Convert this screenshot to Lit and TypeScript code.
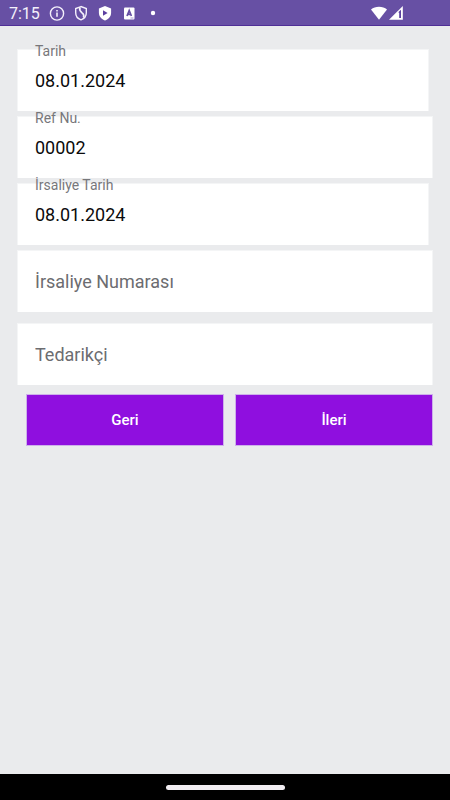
import { LitElement, html, css } from "lit";
import { customElement, property } from "lit/decorators.js";

@customElement("status-bar")
class StatusBar extends LitElement {
  static styles = css`
    :host {
      display: flex;
      align-items: center;
      box-sizing: border-box;
      height: 26px;
      padding: 0 46px 0 9px;
      background: #6750a4;
      border-bottom: 1px solid #4f2f96;
      color: #f4f0fb;
      font-size: 16px;
      line-height: 24px;
    }
    .clock {
      width: 40px;
      padding-top: 2px;
    }
    .icons {
      display: flex;
      flex: 1;
      gap: 8px;
    }
    svg {
      display: block;
      width: 16px;
      height: 16px;
    }
    .signals {
      display: flex;
    }
    .signals svg {
      width: 17px;
    }
  `;

  render() {
    return html`
      <div class="clock">7:15</div>
      <div class="icons">
        <svg viewBox="0 0 16 16" fill="none" stroke="#f4f0fb" stroke-width="1.4">
          <circle cx="8" cy="8.5" r="6.6" />
          <path d="M8 7.6v4.2M8 5v1.6" stroke-width="1.6" />
        </svg>
        <svg viewBox="0 0 16 16" fill="none" stroke="#f4f0fb" stroke-width="1.4">
          <path d="M8 1.6 2.7 3.6v4.2c0 3.4 2.2 6 5.3 7 3.1-1 5.3-3.6 5.3-7V3.6z" />
          <path d="M7 2.4c-1 2.600 0 3.800 1.800 5.200 1.900 1.400 2.700 2.600 1.700 5" stroke-width="1.700" />
        </svg>
        <svg viewBox="0 0 16 16">
          <path fill="#fff" d="M8 1 1.9 3.4v4.4c0 3.700 2.600 6.700 6.100 7.700 3.500-1 6.100-4 6.100-7.700V3.400z" />
          <path fill="#5b3fa0" d="M6 5.300v5.400l4.600-2.700z" />
        </svg>
        <svg viewBox="0 0 16 16">
          <rect x="3" y="2.500" width="10.500" height="12" rx="1" fill="#fff" />
          <path d="M6 11 8.200 5.500 10.400 11M6.800 9.400h2.800" fill="none" stroke="#6750a4" stroke-width="1.700" />
          <path d="M9.500 13h3" stroke="#a99bce" />
        </svg>
        <svg viewBox="0 0 16 16"><circle cx="8" cy="8" r="2.200" fill="#fff" /></svg>
      </div>
      <div class="signals">
        <svg viewBox="0 0 17 16" fill="#fff">
          <path d="M1 4.600C5 .8 13 .8 17 4.600L9 14.700z" />
        </svg>
        <svg viewBox="0 0 17 16">
          <path fill="#fff" d="M2 14.700 15.800 1v13.700z" />
          <path fill="#5b3fa0" d="M11.200 7.200 14 4.800v8.200h-1.800V7.800z" />
        </svg>
      </div>
    `;
  }
}

@customElement("form-field")
class FormField extends LitElement {
  @property() label = "";
  @property() value = "";

  static styles = css`
    :host {
      display: block;
    }
    .box {
      position: relative;
      box-sizing: border-box;
      height: 62px;
      background: #fff;
      border: 1px solid #f4f5f6;
      border-bottom: 0;
    }
    label {
      position: absolute;
      top: -7px;
      left: 17px;
      color: #77777b;
      font-size: 14px;
      line-height: 16px;
    }
    input {
      box-sizing: border-box;
      display: block;
      width: 100%;
      height: 100%;
      margin: 0;
      padding: 0 17px;
      border: 0;
      outline: 0;
      background: transparent;
      color: #0b0b0c;
      font: inherit;
      font-size: 18px;
    }
    input::placeholder {
      color: #6c6c70;
      opacity: 1;
    }
  `;

  render() {
    return html`
      <div class="box">
        ${this.value
          ? html`<label for="field">${this.label}</label>
              <input id="field" type="text" .value=${this.value} />`
          : html`<input type="text" aria-label=${this.label} placeholder=${this.label} />`}
      </div>
    `;
  }
}

@customElement("app-root")
class AppRoot extends LitElement {
  static styles = css`
    :host {
      display: flex;
      flex-direction: column;
      min-height: 100vh;
      background: #eaebed;
      font-family: Roboto, "Noto Sans", sans-serif;
    }
    form {
      display: flex;
      flex: 1;
      flex-direction: column;
      padding: 23px 17px 0;
    }
    .fields {
      display: flex;
      flex-direction: column;
      gap: 5px;
      margin-bottom: 11px;
    }
    .date {
      margin-right: 4px;
    }
    .actions {
      display: grid;
      grid-template-columns: 1fr 1fr;
      gap: 11px;
      margin-top: 9px;
      padding-left: 9px;
    }
    button {
      height: 52px;
      padding: 0;
      border: 1px solid #cdb0ea;
      border-radius: 0;
      background: #8f0fdf;
      color: #fff;
      font: inherit;
      font-size: 15px;
      font-weight: 500;
    }
    .nav {
      display: flex;
      align-items: center;
      justify-content: center;
      height: 26px;
      background: #000;
    }
    .handle {
      width: 119px;
      height: 5px;
      border-radius: 3px;
      background: #f1edf2;
    }
  `;

  render() {
    return html`
      <status-bar></status-bar>
      <form @submit=${(e: Event) => e.preventDefault()}>
        <div class="fields">
          <form-field class="date" label="Tarih" value="08.01.2024"></form-field>
          <form-field label="Ref Nu." value="00002"></form-field>
          <form-field class="date" label="İrsaliye Tarih" value="08.01.2024"></form-field>
          <form-field label="İrsaliye Numarası"></form-field>
        </div>
        <form-field label="Tedarikçi"></form-field>
        <div class="actions">
          <button type="button">Geri</button>
          <button type="submit">İleri</button>
        </div>
      </form>
      <div class="nav"><div class="handle"></div></div>
    `;
  }
}
